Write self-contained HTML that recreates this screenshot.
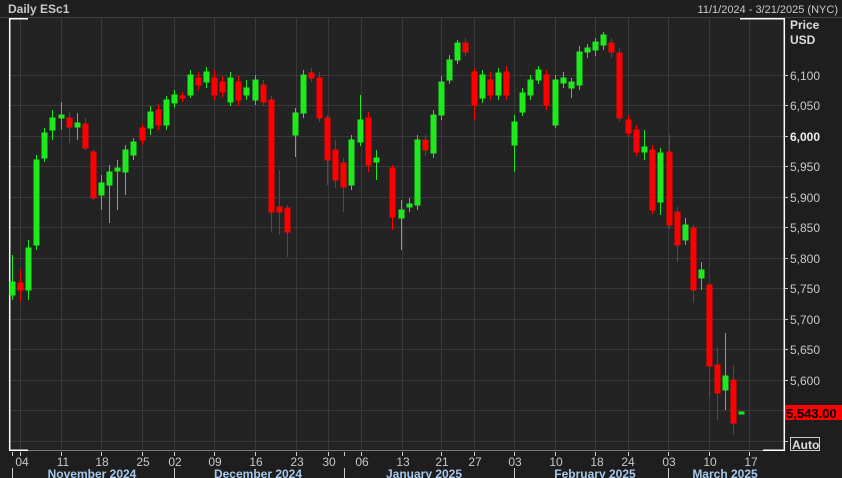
<!DOCTYPE html><html><head><style>
body{margin:0;width:842px;height:478px;background:#1e1e1e;overflow:hidden;font-family:"Liberation Sans",sans-serif}
</style></head><body>
<svg width="842" height="478" xmlns="http://www.w3.org/2000/svg" style="position:absolute;left:0;top:0">
<rect width="842" height="478" fill="#1e1e1e"/>
<rect x="9" y="18" width="775" height="432" fill="#222322"/>
<line x1="0" y1="17.5" x2="842" y2="17.5" stroke="#444"/>
<text x="8" y="13" fill="#c8c8c8" font-size="12" font-weight="bold">Daily ESc1</text>
<text x="838" y="13" fill="#c8c8c8" font-size="11" text-anchor="end">11/1/2024 - 3/21/2025 (NYC)</text>
<g stroke="#3a3a3a" stroke-width="1">
<line x1="9" y1="75.5" x2="784" y2="75.5"/><line x1="9" y1="105.5" x2="784" y2="105.5"/><line x1="9" y1="136.5" x2="784" y2="136.5"/><line x1="9" y1="166.5" x2="784" y2="166.5"/><line x1="9" y1="197.5" x2="784" y2="197.5"/><line x1="9" y1="227.5" x2="784" y2="227.5"/><line x1="9" y1="258.5" x2="784" y2="258.5"/><line x1="9" y1="288.5" x2="784" y2="288.5"/><line x1="9" y1="319.5" x2="784" y2="319.5"/><line x1="9" y1="349.5" x2="784" y2="349.5"/><line x1="9" y1="380.5" x2="784" y2="380.5"/><line x1="9" y1="410.5" x2="784" y2="410.5"/><line x1="9" y1="441.5" x2="784" y2="441.5"/>
<line x1="20.5" y1="18" x2="20.5" y2="450"/><line x1="61.5" y1="18" x2="61.5" y2="450"/><line x1="101.5" y1="18" x2="101.5" y2="450"/><line x1="142.5" y1="18" x2="142.5" y2="450"/><line x1="174.5" y1="18" x2="174.5" y2="450"/><line x1="214.5" y1="18" x2="214.5" y2="450"/><line x1="255.5" y1="18" x2="255.5" y2="450"/><line x1="296.5" y1="18" x2="296.5" y2="450"/><line x1="328.5" y1="18" x2="328.5" y2="450"/><line x1="361.5" y1="18" x2="361.5" y2="450"/><line x1="402.5" y1="18" x2="402.5" y2="450"/><line x1="441.5" y1="18" x2="441.5" y2="450"/><line x1="474.5" y1="18" x2="474.5" y2="450"/><line x1="514.5" y1="18" x2="514.5" y2="450"/><line x1="555.5" y1="18" x2="555.5" y2="450"/><line x1="595.5" y1="18" x2="595.5" y2="450"/><line x1="628.5" y1="18" x2="628.5" y2="450"/><line x1="668.5" y1="18" x2="668.5" y2="450"/><line x1="709.5" y1="18" x2="709.5" y2="450"/><line x1="749.5" y1="18" x2="749.5" y2="450"/>
</g>
<g stroke="#fff" stroke-width="1.5" fill="none">
<path d="M28 18.7H9.7V450.3H28"/>
<path d="M740 18.7H784.3V450.3H763"/>
</g>
<line x1="28" y1="450.5" x2="763" y2="450.5" stroke="#777"/>
<g stroke="#1ee81e" fill="#1ee81e">
<line x1="12.5" y1="255" x2="12.5" y2="300"/><rect x="10" y="282" width="5" height="13"/>
<line x1="28.5" y1="240" x2="28.5" y2="300"/><rect x="26" y="248" width="5" height="42"/>
<line x1="36.5" y1="155" x2="36.5" y2="250"/><rect x="34" y="160" width="5" height="85"/>
<line x1="44.5" y1="128" x2="44.5" y2="162"/><rect x="42" y="133" width="5" height="25"/>
<line x1="52.5" y1="110" x2="52.5" y2="140"/><rect x="50" y="118" width="5" height="12"/>
<line x1="61.5" y1="102" x2="61.5" y2="130"/><rect x="59" y="115" width="5" height="3"/>
<line x1="77.5" y1="113" x2="77.5" y2="140"/><rect x="75" y="123" width="5" height="4"/>
<line x1="101.5" y1="175" x2="101.5" y2="210"/><rect x="99" y="183" width="5" height="12"/>
<line x1="109.5" y1="165" x2="109.5" y2="223"/><rect x="107" y="172" width="5" height="13"/>
<line x1="117.5" y1="160" x2="117.5" y2="210"/><rect x="115" y="168" width="5" height="3"/>
<line x1="125.5" y1="145" x2="125.5" y2="195"/><rect x="123" y="150" width="5" height="22"/>
<line x1="133.5" y1="138" x2="133.5" y2="160"/><rect x="131" y="142" width="5" height="13"/>
<line x1="150.5" y1="106" x2="150.5" y2="135"/><rect x="148" y="112" width="5" height="16"/>
<line x1="166.5" y1="96" x2="166.5" y2="130"/><rect x="164" y="100" width="5" height="25"/>
<line x1="174.5" y1="90" x2="174.5" y2="108"/><rect x="172" y="95" width="5" height="8"/>
<line x1="190.5" y1="70" x2="190.5" y2="98"/><rect x="188" y="75" width="5" height="20"/>
<line x1="206.5" y1="67" x2="206.5" y2="88"/><rect x="204" y="72" width="5" height="10"/>
<line x1="230.5" y1="72" x2="230.5" y2="106"/><rect x="228" y="78" width="5" height="24"/>
<line x1="246.5" y1="80" x2="246.5" y2="100"/><rect x="244" y="88" width="5" height="7"/>
<line x1="255.5" y1="75" x2="255.5" y2="105"/><rect x="253" y="80" width="5" height="20"/>
<line x1="295.5" y1="108" x2="295.5" y2="157"/><rect x="293" y="113" width="5" height="22"/>
<line x1="303.5" y1="70" x2="303.5" y2="118"/><rect x="301" y="75" width="5" height="38"/>
<line x1="351.5" y1="135" x2="351.5" y2="190"/><rect x="349" y="140" width="5" height="45"/>
<line x1="360.5" y1="95" x2="360.5" y2="146"/><rect x="358" y="120" width="5" height="22"/>
<line x1="376.5" y1="150" x2="376.5" y2="180"/><rect x="374" y="158" width="5" height="4"/>
<line x1="401.5" y1="200" x2="401.5" y2="250"/><rect x="399" y="210" width="5" height="8"/>
<line x1="409.5" y1="198" x2="409.5" y2="212"/><rect x="407" y="204" width="5" height="3"/>
<line x1="417.5" y1="135" x2="417.5" y2="210"/><rect x="415" y="140" width="5" height="65"/>
<line x1="433.5" y1="110" x2="433.5" y2="158"/><rect x="431" y="115" width="5" height="38"/>
<line x1="441.5" y1="76" x2="441.5" y2="120"/><rect x="439" y="82" width="5" height="33"/>
<line x1="449.5" y1="55" x2="449.5" y2="84"/><rect x="447" y="60" width="5" height="20"/>
<line x1="457.5" y1="40" x2="457.5" y2="64"/><rect x="455" y="43" width="5" height="17"/>
<line x1="482.5" y1="70" x2="482.5" y2="103"/><rect x="480" y="75" width="5" height="23"/>
<line x1="498.5" y1="68" x2="498.5" y2="100"/><rect x="496" y="73" width="5" height="22"/>
<line x1="514.5" y1="115" x2="514.5" y2="172"/><rect x="512" y="122" width="5" height="23"/>
<line x1="522.5" y1="88" x2="522.5" y2="116"/><rect x="520" y="93" width="5" height="19"/>
<line x1="530.5" y1="75" x2="530.5" y2="100"/><rect x="528" y="80" width="5" height="15"/>
<line x1="538.5" y1="66" x2="538.5" y2="84"/><rect x="536" y="70" width="5" height="10"/>
<line x1="555.5" y1="75" x2="555.5" y2="128"/><rect x="553" y="80" width="5" height="45"/>
<line x1="563.5" y1="72" x2="563.5" y2="88"/><rect x="561" y="78" width="5" height="5"/>
<line x1="571.5" y1="78" x2="571.5" y2="98"/><rect x="569" y="82" width="5" height="6"/>
<line x1="579.5" y1="46" x2="579.5" y2="90"/><rect x="577" y="52" width="5" height="33"/>
<line x1="587.5" y1="44" x2="587.5" y2="58"/><rect x="585" y="48" width="5" height="4"/>
<line x1="595.5" y1="38" x2="595.5" y2="56"/><rect x="593" y="42" width="5" height="8"/>
<line x1="603.5" y1="32" x2="603.5" y2="50"/><rect x="601" y="35" width="5" height="10"/>
<line x1="644.5" y1="130" x2="644.5" y2="160"/><rect x="642" y="147" width="5" height="5"/>
<line x1="660.5" y1="148" x2="660.5" y2="215"/><rect x="658" y="153" width="5" height="49"/>
<line x1="685.5" y1="218" x2="685.5" y2="245"/><rect x="683" y="225" width="5" height="15"/>
<line x1="701.5" y1="262" x2="701.5" y2="290"/><rect x="699" y="270" width="5" height="8"/>
<line x1="725.5" y1="333" x2="725.5" y2="410"/><rect x="723" y="376" width="5" height="14"/>
<rect x="739" y="412" width="5" height="2"/>
</g>
<g stroke="#f00" fill="#f00">
<line x1="20.5" y1="270" x2="20.5" y2="302"/><rect x="18" y="283" width="5" height="7"/>
<line x1="69.5" y1="112" x2="69.5" y2="143"/><rect x="67" y="118" width="5" height="9"/>
<line x1="85.5" y1="118" x2="85.5" y2="150"/><rect x="83" y="124" width="5" height="24"/>
<line x1="93.5" y1="150" x2="93.5" y2="200"/><rect x="91" y="152" width="5" height="46"/>
<line x1="142.5" y1="124" x2="142.5" y2="145"/><rect x="140" y="128" width="5" height="12"/>
<line x1="158.5" y1="104" x2="158.5" y2="130"/><rect x="156" y="110" width="5" height="15"/>
<line x1="182.5" y1="92" x2="182.5" y2="102"/><rect x="180" y="96" width="5" height="2"/>
<line x1="198.5" y1="72" x2="198.5" y2="90"/><rect x="196" y="78" width="5" height="7"/>
<line x1="214.5" y1="70" x2="214.5" y2="100"/><rect x="212" y="78" width="5" height="17"/>
<line x1="222.5" y1="76" x2="222.5" y2="97"/><rect x="220" y="82" width="5" height="10"/>
<line x1="238.5" y1="76" x2="238.5" y2="106"/><rect x="236" y="82" width="5" height="18"/>
<line x1="263.5" y1="80" x2="263.5" y2="106"/><rect x="261" y="85" width="5" height="17"/>
<line x1="271.5" y1="96" x2="271.5" y2="232"/><rect x="269" y="100" width="5" height="112"/>
<line x1="279.5" y1="170" x2="279.5" y2="235"/><rect x="277" y="207" width="5" height="5"/>
<line x1="287.5" y1="205" x2="287.5" y2="257"/><rect x="285" y="208" width="5" height="24"/>
<line x1="311.5" y1="68" x2="311.5" y2="82"/><rect x="309" y="73" width="5" height="5"/>
<line x1="319.5" y1="72" x2="319.5" y2="122"/><rect x="317" y="78" width="5" height="40"/>
<line x1="327.5" y1="115" x2="327.5" y2="185"/><rect x="325" y="118" width="5" height="42"/>
<line x1="335.5" y1="140" x2="335.5" y2="188"/><rect x="333" y="150" width="5" height="30"/>
<line x1="343.5" y1="158" x2="343.5" y2="212"/><rect x="341" y="163" width="5" height="24"/>
<line x1="368.5" y1="112" x2="368.5" y2="172"/><rect x="366" y="118" width="5" height="47"/>
<line x1="392.5" y1="165" x2="392.5" y2="230"/><rect x="390" y="168" width="5" height="49"/>
<line x1="425.5" y1="135" x2="425.5" y2="156"/><rect x="423" y="140" width="5" height="10"/>
<line x1="465.5" y1="38" x2="465.5" y2="56"/><rect x="463" y="43" width="5" height="9"/>
<line x1="474.5" y1="68" x2="474.5" y2="120"/><rect x="472" y="72" width="5" height="33"/>
<line x1="490.5" y1="72" x2="490.5" y2="100"/><rect x="488" y="80" width="5" height="15"/>
<line x1="506.5" y1="66" x2="506.5" y2="100"/><rect x="504" y="72" width="5" height="23"/>
<line x1="546.5" y1="70" x2="546.5" y2="110"/><rect x="544" y="75" width="5" height="30"/>
<line x1="611.5" y1="38" x2="611.5" y2="58"/><rect x="609" y="43" width="5" height="9"/>
<line x1="619.5" y1="48" x2="619.5" y2="122"/><rect x="617" y="53" width="5" height="65"/>
<line x1="628.5" y1="115" x2="628.5" y2="136"/><rect x="626" y="120" width="5" height="13"/>
<line x1="636.5" y1="125" x2="636.5" y2="156"/><rect x="634" y="130" width="5" height="22"/>
<line x1="652.5" y1="145" x2="652.5" y2="214"/><rect x="650" y="150" width="5" height="60"/>
<line x1="669.5" y1="135" x2="669.5" y2="229"/><rect x="667" y="152" width="5" height="73"/>
<line x1="677.5" y1="207" x2="677.5" y2="262"/><rect x="675" y="212" width="5" height="33"/>
<line x1="693.5" y1="225" x2="693.5" y2="303"/><rect x="691" y="228" width="5" height="62"/>
<line x1="709.5" y1="283" x2="709.5" y2="397"/><rect x="707" y="285" width="5" height="81"/>
<line x1="717.5" y1="347" x2="717.5" y2="420"/><rect x="715" y="365" width="5" height="28"/>
<line x1="733.5" y1="365" x2="733.5" y2="435"/><rect x="731" y="380" width="5" height="43"/>
</g>
<g fill="#c8c8c8" font-size="12">
<text x="790" y="29" font-weight="bold" fill="#ddd">Price</text>
<text x="790" y="44" font-weight="bold" fill="#ddd">USD</text>
<g stroke="#ccc"><line x1="784" y1="75.5" x2="788" y2="75.5"/><line x1="784" y1="105.5" x2="788" y2="105.5"/><line x1="784" y1="136.5" x2="788" y2="136.5"/><line x1="784" y1="166.5" x2="788" y2="166.5"/><line x1="784" y1="197.5" x2="788" y2="197.5"/><line x1="784" y1="227.5" x2="788" y2="227.5"/><line x1="784" y1="258.5" x2="788" y2="258.5"/><line x1="784" y1="288.5" x2="788" y2="288.5"/><line x1="784" y1="319.5" x2="788" y2="319.5"/><line x1="784" y1="349.5" x2="788" y2="349.5"/><line x1="784" y1="380.5" x2="788" y2="380.5"/><line x1="784" y1="441.5" x2="788" y2="441.5"/></g>
<text x="790" y="80">6,100</text><text x="790" y="110">6,050</text><text x="790" y="141" font-weight="bold" fill="#eee">6,000</text><text x="790" y="171">5,950</text><text x="790" y="202">5,900</text><text x="790" y="232">5,850</text><text x="790" y="263">5,800</text><text x="790" y="293">5,750</text><text x="790" y="324">5,700</text><text x="790" y="354">5,650</text><text x="790" y="385">5,600</text>
</g>
<rect x="785" y="405" width="57" height="15" fill="#f00"/>
<text x="786" y="418" font-size="13" font-weight="bold" fill="#000">5,543.00</text>
<rect x="790.5" y="437.5" width="29" height="13" fill="none" stroke="#ccc"/>
<text x="792" y="449" font-size="12" font-weight="bold" fill="#ddd">Auto</text>
<g stroke="#ccc"><line x1="12.5" y1="452" x2="12.5" y2="456"/><line x1="20.5" y1="452" x2="20.5" y2="456"/><line x1="61.5" y1="452" x2="61.5" y2="456"/><line x1="101.5" y1="452" x2="101.5" y2="456"/><line x1="142.5" y1="452" x2="142.5" y2="456"/><line x1="174.5" y1="452" x2="174.5" y2="456"/><line x1="214.5" y1="452" x2="214.5" y2="456"/><line x1="255.5" y1="452" x2="255.5" y2="456"/><line x1="296.5" y1="452" x2="296.5" y2="456"/><line x1="328.5" y1="452" x2="328.5" y2="456"/><line x1="344.5" y1="452" x2="344.5" y2="456"/><line x1="361.5" y1="452" x2="361.5" y2="456"/><line x1="402.5" y1="452" x2="402.5" y2="456"/><line x1="441.5" y1="452" x2="441.5" y2="456"/><line x1="474.5" y1="452" x2="474.5" y2="456"/><line x1="514.5" y1="452" x2="514.5" y2="456"/><line x1="555.5" y1="452" x2="555.5" y2="456"/><line x1="595.5" y1="452" x2="595.5" y2="456"/><line x1="628.5" y1="452" x2="628.5" y2="456"/><line x1="668.5" y1="452" x2="668.5" y2="456"/><line x1="709.5" y1="452" x2="709.5" y2="456"/><line x1="749.5" y1="452" x2="749.5" y2="456"/>
<line x1="12.5" y1="468" x2="12.5" y2="478"/><line x1="174.5" y1="468" x2="174.5" y2="478"/><line x1="344.5" y1="468" x2="344.5" y2="478"/><line x1="514.5" y1="468" x2="514.5" y2="478"/><line x1="668.5" y1="468" x2="668.5" y2="478"/></g>
<g fill="#c8c8c8" font-size="12" text-anchor="middle">
<text x="22" y="466">04</text><text x="63" y="466">11</text><text x="102" y="466">18</text><text x="143" y="466">25</text><text x="175" y="466">02</text><text x="215" y="466">09</text><text x="256" y="466">16</text><text x="297" y="466">23</text><text x="329" y="466">30</text><text x="362" y="466">06</text><text x="403" y="466">13</text><text x="442" y="466">21</text><text x="475" y="466">27</text><text x="515" y="466">03</text><text x="556" y="466">10</text><text x="597" y="466">18</text><text x="628" y="466">24</text><text x="669" y="466">03</text><text x="710" y="466">10</text><text x="751" y="466">17</text>
</g>
<g fill="#a8c8ea" font-size="12" font-weight="bold" text-anchor="middle">
<text x="92" y="478">November 2024</text><text x="258" y="478">December 2024</text><text x="424" y="478">January 2025</text><text x="595" y="478">February 2025</text><text x="725" y="478">March 2025</text>
</g>
</svg>
</body></html>
